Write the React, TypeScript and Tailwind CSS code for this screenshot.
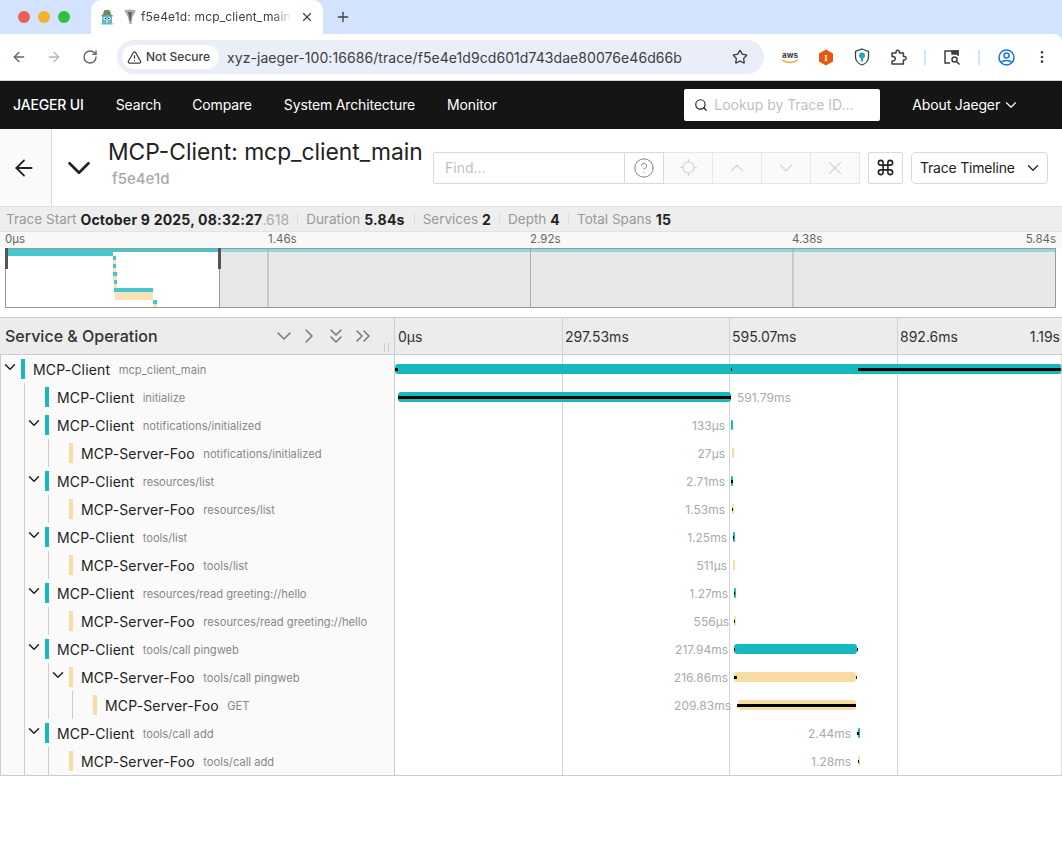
import {
  ArrowLeft,
  ArrowRight,
  ChevronDown,
  ChevronRight,
  ChevronUp,
  ChevronsDown,
  ChevronsRight,
  CircleHelp,
  Command,
  Locate,
  MoreVertical,
  Plus,
  RotateCw,
  Search,
  Star,
  TriangleAlert,
  X,
} from "lucide-react";

type Span = {
  service: string;
  op: string;
  depth: number;
  open?: boolean;
  client: boolean;
  left: number;
  right: number;
  label: string;
  labelEnd?: number;
  labelStart?: number;
  marks?: [number, number][];
};

// x values are page pixels, the timeline starts at 395
const spans: Span[] = [
  { service: "MCP-Client", op: "mcp_client_main", depth: 0, open: true, client: true, left: 395, right: 1062, label: "", marks: [[395, 398], [731, 732], [858, 1062]] },
  { service: "MCP-Client", op: "initialize", depth: 1, client: true, left: 398, right: 731, label: "591.79ms", labelStart: 737, marks: [[398, 731]] },
  { service: "MCP-Client", op: "notifications/initialized", depth: 1, open: true, client: true, left: 731, right: 733, label: "133µs", labelEnd: 725 },
  { service: "MCP-Server-Foo", op: "notifications/initialized", depth: 2, client: false, left: 732, right: 734, label: "27µs", labelEnd: 725 },
  { service: "MCP-Client", op: "resources/list", depth: 1, open: true, client: true, left: 731, right: 733, label: "2.71ms", labelEnd: 725, marks: [[731, 733]] },
  { service: "MCP-Server-Foo", op: "resources/list", depth: 2, client: false, left: 732, right: 734, label: "1.53ms", labelEnd: 725, marks: [[732, 733]] },
  { service: "MCP-Client", op: "tools/list", depth: 1, open: true, client: true, left: 733, right: 735, label: "1.25ms", labelEnd: 727, marks: [[733, 734]] },
  { service: "MCP-Server-Foo", op: "tools/list", depth: 2, client: false, left: 733, right: 735, label: "511µs", labelEnd: 727 },
  { service: "MCP-Client", op: "resources/read greeting://hello", depth: 1, open: true, client: true, left: 734, right: 736, label: "1.27ms", labelEnd: 728, marks: [[734, 735]] },
  { service: "MCP-Server-Foo", op: "resources/read greeting://hello", depth: 2, client: false, left: 734, right: 736, label: "556µs", labelEnd: 729, marks: [[734, 735]] },
  { service: "MCP-Client", op: "tools/call pingweb", depth: 1, open: true, client: true, left: 734, right: 857, label: "217.94ms", labelEnd: 728, marks: [[734, 735], [857, 858]] },
  { service: "MCP-Server-Foo", op: "tools/call pingweb", depth: 2, open: true, client: false, left: 734, right: 856, label: "216.86ms", labelEnd: 728, marks: [[734, 737], [856, 857]] },
  { service: "MCP-Server-Foo", op: "GET", depth: 3, client: false, left: 738, right: 856, label: "209.83ms", labelEnd: 731, marks: [[737, 856]] },
  { service: "MCP-Client", op: "tools/call add", depth: 1, open: true, client: true, left: 858, right: 860, label: "2.44ms", labelEnd: 851, marks: [[857, 859]] },
  { service: "MCP-Server-Foo", op: "tools/call add", depth: 2, client: false, left: 858, right: 860, label: "1.28ms", labelEnd: 851, marks: [[858, 859]] },
];

const TL = 395;

function Gopher() {
  return (
    <svg width="16" height="16" viewBox="0 0 16 16" className="shrink-0">
      <path d="M3 15.500V8a5 5 0 0 1 10 0v7.500z" fill="#5bb8d4" />
      <path d="M1.500 7.500 Q3 6 4 5.500 L5 1.500 Q8 0 11 1.500 L12 5.500 Q13.500 6 14.500 7.500 Q8 5 1.500 7.500z" fill="#6f8a5a" />
      <circle cx="6" cy="9.500" r="1.500" fill="#fff" />
      <circle cx="10" cy="9.500" r="1.500" fill="#fff" />
      <circle cx="6.300" cy="9.500" r=".7" fill="#111" />
      <circle cx="9.700" cy="9.500" r=".7" fill="#111" />
      <rect x="7" y="11.500" width="2" height="2" fill="#f3e3c8" />
      <rect x="1.500" y="14" width="2" height="1.500" fill="#e8c9a0" />
      <rect x="12.500" y="14" width="2" height="1.500" fill="#e8c9a0" />
    </svg>
  );
}

function JaegerFav() {
  return (
    <svg width="14" height="16" viewBox="0 0 14 16" className="shrink-0">
      <path d="M1 1.500 Q7 -0.500 13 1.500 L9.500 8 L8.500 15 L6.500 15 L5 8z" fill="#a9aeb2" />
      <path d="M5 3 L9 3 L7.800 12 L6.800 12z" fill="#5c6368" />
    </svg>
  );
}

function TopChrome() {
  return (
    <div className="h-[81px] bg-[#d3e3fd] flex flex-col">
      <div className="h-[34px] flex items-center">
        <div className="flex items-center gap-[8px] pl-[18px] w-[91px]">
          <span className="w-3 h-3 rounded-full bg-[#ec5f57]" />
          <span className="w-3 h-3 rounded-full bg-[#f4b32e]" />
          <span className="w-3 h-3 rounded-full bg-[#2cc240]" />
        </div>
        <div className="w-[232px] h-[34px] bg-white rounded-t-[10px] flex items-center pl-[8px] self-end">
          <Gopher />
          <span className="ml-[8px] flex">
            <JaegerFav />
          </span>
          <span className="ml-[4px] text-[12px] tracking-[0.15px] text-[#3c4043] whitespace-nowrap [mask-image:linear-gradient(to_right,black_88%,transparent)]">
            f5e4e1d: mcp_client_main
          </span>
          <X className="w-[14px] h-[14px] ml-[9px] shrink-0 text-[#3c4043]" strokeWidth={2} />
        </div>
        <Plus className="w-4 h-4 ml-[12px] text-[#3c4043]" strokeWidth={2} />
      </div>
      <div className="h-[47px] bg-white rounded-tr-[8px] flex items-center border-b border-[#d6d6d6]">
        <div className="flex items-center w-[117px] pl-[11px] gap-[19px]">
          <ArrowLeft className="w-4 h-4 text-[#5f6368]" />
          <ArrowRight className="w-4 h-4 text-[#b4b7ba]" />
          <RotateCw className="w-4 h-4 text-[#5f6368] ml-[1px]" />
        </div>
        <div className="w-[647px] h-[34px] bg-[#e9eef9] rounded-full flex items-center pl-[5px]">
          <div className="w-[97px] h-[24px] bg-white rounded-full flex items-center pl-[5px] gap-[4px]">
            <TriangleAlert className="w-[15px] h-[15px] text-[#3c4043]" />
            <span className="text-[12px] font-medium text-[#3c4043] whitespace-nowrap">Not Secure</span>
          </div>
          <span className="ml-[8px] text-[14px] text-[#3c4043] tracking-[0.07px] whitespace-nowrap">
            xyz-jaeger-100:16686/trace/f5e4e1d9cd601d743dae80076e46d66b
          </span>
          <Star className="w-4 h-4 text-[#3c4043] ml-auto mr-[16px]" />
        </div>
        <div className="relative flex-1 flex items-center">
          {/* extension icons */}
          <div className="ml-[16px] w-[20px] flex flex-col items-center">
            <span className="text-[8px] leading-[8px] font-bold text-[#3c4043]">aws</span>
            <svg width="18" height="5" viewBox="0 0 18 5">
              <path d="M1 1 Q9 6 17 1" stroke="#f59e2c" strokeWidth="1.400" fill="none" />
            </svg>
          </div>
          <div className="ml-[18px] flex">
            <svg width="16" height="17" viewBox="0 0 16 17">
              <path d="M8 0.500 15 4.500V12.500L8 16.500 1 12.500V4.500z" fill="#e8590c" />
              <text x="8" y="12" textAnchor="middle" fontSize="9" fontWeight="700" fill="#fff" fontFamily="Liberation Serif, serif">I</text>
            </svg>
          </div>
          <div className="ml-[20px] flex">
            <svg width="16" height="18" viewBox="0 0 16 18">
              <path d="M8 1 14.500 3.500V9C14.500 13 11 16 8 17 5 16 1.500 13 1.500 9V3.500z" fill="#fff" stroke="#3c4043" strokeWidth="1.300" />
              <circle cx="8" cy="7.500" r="3" fill="#26a6b5" />
              <rect x="7" y="10" width="2" height="3.500" fill="#26a6b5" />
            </svg>
          </div>
          <div className="ml-[20px] flex">
            <svg width="17" height="17" viewBox="0 0 17 17" fill="none" stroke="#3c4043" strokeWidth="1.500">
              <path d="M2 4h4V3a1.700 1.700 0 0 1 3.400 0v1h4v3.500h1a1.700 1.700 0 0 1 0 3.400h-1V15H2v-3h1a2 2 0 0 0 0-4.500H2z" strokeLinejoin="round" />
            </svg>
          </div>
          <span className="ml-[17px] w-[2px] h-[15px] bg-[#d3e3fd]" />
          <div className="ml-[17px] flex">
            <svg width="18" height="17" viewBox="0 0 18 17" fill="none" stroke="#3c4043" strokeWidth="1.500">
              <path d="M7 14H2V2h13v5" />
              <path d="M9 2h6v3H9z" fill="#3c4043" />
              <circle cx="11.500" cy="10.500" r="2.500" />
              <path d="M13.500 12.500 16.500 15.500" />
            </svg>
          </div>
          <span className="ml-[17px] w-[2px] h-[15px] bg-[#d3e3fd]" />
          <div className="ml-[18px] flex">
            <svg width="17" height="17" viewBox="0 0 17 17" fill="none" stroke="#1a73e8" strokeWidth="1.500">
              <circle cx="8.500" cy="8.500" r="7.500" />
              <circle cx="8.500" cy="6.500" r="2.500" />
              <path d="M3.500 13.500C5 10.800 12 10.800 13.500 13.500" />
            </svg>
          </div>
          <MoreVertical className="w-4 h-4 ml-[19px] text-[#3c4043]" />
        </div>
      </div>
    </div>
  );
}

function Nav() {
  return (
    <div className="h-[48px] bg-[#151515] flex items-center text-white text-[14px] tracking-[-0.15px] whitespace-nowrap">
      <span className="ml-[13px] pb-[2px] font-medium">JAEGER UI</span>
      <span className="ml-[32px] pb-[2px]">Search</span>
      <span className="ml-[31px] pb-[2px]">Compare</span>
      <span className="ml-[32px] pb-[2px]">System Architecture</span>
      <span className="ml-[32px] pb-[2px]">Monitor</span>
      <div className="ml-auto w-[196px] h-[32px] bg-white rounded-[2px] flex items-center pl-[10px] gap-[6px] tracking-normal">
        <Search className="w-[14px] h-[14px] text-[#222]" strokeWidth={2} />
        <span className="text-[14px] pb-[2px] tracking-[-0.05px] text-[#bfbfbf]">Lookup by Trace ID...</span>
      </div>
      <span className="ml-[32px] pb-[2px]">About Jaeger</span>
      <ChevronDown className="w-[18px] h-[18px] ml-[2px] mr-[42px]" strokeWidth={1.500} />
    </div>
  );
}

function TraceHeader() {
  return (
    <div className="h-[77px] bg-white flex items-center">
      <div className="w-[52px] h-full bg-[#fafafa] border-r border-[#ddd] flex items-center justify-center pr-[3px]">
        <ArrowLeft className="w-[26px] h-[26px] text-[#222]" strokeWidth={1.700} />
      </div>
      <ChevronDown className="w-[38px] h-[38px] ml-[8px] text-[#222]" strokeWidth={1.700} />
      <div className="ml-[10px] w-[325px] flex flex-col mb-[9px]">
        <span className="text-[22.800px] leading-[32px] text-[#222] whitespace-nowrap">MCP-Client: mcp_client_main</span>
        <span className="ml-[4px] text-[15px] leading-[22px] font-medium text-[#aaa]">f5e4e1d</span>
      </div>
      <div className="h-[32px] flex items-center">
        <div className="w-[192px] h-full border border-[#d9d9d9] rounded-l-[2px] flex items-center pl-[11px] text-[14px] text-[#bfbfbf]">Find...</div>
        <div className="w-[39px] h-full border-y border-r border-[#d9d9d9] flex items-center justify-center">
          <CircleHelp className="w-[22px] h-[22px] text-[#777]" strokeWidth={1} />
        </div>
        <div className="w-[49px] h-full bg-[#fafafa] border-y border-r border-[#e6e6e6] flex items-center justify-center">
          <Locate className="w-[19px] h-[19px] text-[#d5d5d5]" strokeWidth={1.500} />
        </div>
        {[ChevronUp, ChevronDown, X].map((Icon, i) => (
          <div key={i} className="w-[49px] h-full bg-[#fafafa] border-y border-r border-[#e6e6e6] flex items-center justify-center">
            <Icon className="w-[22px] h-[22px] text-[#d5d5d5]" strokeWidth={1.300} />
          </div>
        ))}
      </div>
      <div className="ml-[8px] w-[35px] h-[32px] border border-[#d9d9d9] rounded-[2px] flex items-center justify-center">
        <Command className="w-[19px] h-[19px] text-[#222]" strokeWidth={2} />
      </div>
      <div className="ml-[8px] w-[137px] h-[32px] border border-[#d9d9d9] rounded-[4px] flex items-center pl-[8px] text-[14px] tracking-[-0.2px] text-[#222] whitespace-nowrap">
        Trace Timeline
        <ChevronDown className="w-[18px] h-[18px] ml-[9px]" strokeWidth={1.700} />
      </div>
    </div>
  );
}

function Stat({ name, value, suffix }: { name: string; value: string; suffix?: string }) {
  return (
    <span className="flex items-center whitespace-nowrap">
      <span className="text-[13.500px] text-[#999]">{name}</span>
      <span className="ml-[4px] text-[14px] font-bold tracking-[0.2px] text-[#222]">{value}</span>
      {suffix && <span className="text-[14px] text-[#aaa]">{suffix}</span>}
    </span>
  );
}

function StatsBar() {
  const sep = <span className="mx-[8px] w-px h-[12px] bg-[#ddd]" />;
  return (
    <div className="h-[26px] bg-[#eee] border-y border-[#e4e4e4] flex items-center pl-[6px]">
      <Stat name="Trace Start" value="October 9 2025, 08:32:27" suffix=".618" />
      {sep}
      <Stat name="Duration" value="5.84s" />
      <span className="ml-[1px]" />
      {sep}
      <Stat name="Services" value="2" />
      {sep}
      <Stat name="Depth" value="4" />
      {sep}
      <Stat name="Total Spans" value="15" />
    </div>
  );
}

function Minimap() {
  // rows of the small overview: x, y, w, h, colour
  const teal = "#45c7cd";
  const cream = "#f9e2b5";
  const steps: [number, number, number, number, string][] = [
    [113, 8, 3, 4, teal],
    [113, 12, 3, 4, cream],
    [113, 16, 3, 4, teal],
    [113, 20, 3, 4, cream],
    [113, 24, 4, 4, teal],
    [113, 28, 4, 4, cream],
    [114, 32, 3, 4, teal],
    [114, 36, 3, 4, cream],
    [114, 40, 39, 4, teal],
    [114, 44, 1, 1, cream],
    [115, 44, 38, 8, cream],
    [153, 52, 4, 4, teal],
    [153, 56, 4, 3, cream],
  ];
  return (
    <div className="pr-[6px] pl-[5px] pb-[9px] bg-white">
      <svg width="1051" height="60" viewBox="5 0 1051 60" className="block">
        <rect x="5" y="0" width="1051" height="60" fill="#e8e8e8" />
        <rect x="5" y="0" width="215" height="60" fill="#fff" />
        <rect x="5" y="1" width="1051" height="3" fill="#98d7d9" />
        <rect x="7" y="1" width="212" height="3" fill={teal} />
        <rect x="7" y="1" width="106" height="7" fill={teal} />
        {steps.map(([x, y, w, h, c], i) => (
          <rect key={i} x={x} y={y} width={w} height={h} fill={c} />
        ))}
        {[268, 530.500, 793].map((x) => (
          <rect key={x} x={x - 0.500} y="0" width="1" height="60" fill="#aaa" />
        ))}
        <rect x="5.500" y="0.500" width="1050" height="59" fill="none" stroke="#999" />
        <rect x="5" y="0" width="3" height="21" fill="#555" />
        <rect x="218" y="0" width="3" height="21" fill="#555" />
        <rect x="219" y="21" width="1" height="39" fill="#999" />
      </svg>
    </div>
  );
}

function Ruler() {
  return (
    <div className="h-[16px] bg-[#f8f8f8] pl-[5px] pr-[6px] flex text-[11.500px] leading-[14px] text-[#666]">
      <span className="w-[263px]">0µs</span>
      <span className="w-[262px]">1.46s</span>
      <span className="w-[262px]">2.92s</span>
      <span className="w-[232px]">4.38s</span>
      <span className="ml-auto">5.84s</span>
    </div>
  );
}

function Row({ s }: { s: Span }) {
  const barColor = s.client ? "bg-[#17b8be]" : "bg-[#f8dca1]";
  return (
    <div className="h-[28px] flex">
      <div className="w-[395px] shrink-0 h-full flex items-center bg-[#fafafa] border-l border-[#ccc] border-r border-r-[#ccc]">
        {Array.from({ length: s.depth }).map((_, i) => (
          <span key={i} className="w-[24px] shrink-0 h-full border-r border-[#ccc]" />
        ))}
        <span className="w-[20px] shrink-0 flex justify-center -mt-[4px] -ml-[1px] mr-[1px]">
          {s.open && <ChevronDown className="w-[18px] h-[18px] text-[#222]" strokeWidth={2} />}
        </span>
        <span className={`w-[4px] h-[20px] shrink-0 ${barColor}`} />
        <span className="ml-[8px] text-[14px] tracking-[0.15px] text-[#222] whitespace-nowrap">{s.service}</span>
        <span className="ml-[8.500px] mt-[3px] text-[11.200px] text-[#888] whitespace-nowrap">{s.op}</span>
      </div>
      <div className="relative flex-1 h-full">
        <span
          className={`absolute top-[9px] h-[10px] rounded-[3px] ${barColor}`}
          style={{ left: s.left - TL, width: s.right - s.left }}
        />
        {s.marks?.map(([a, b], i) => (
          <span
            key={i}
            className="absolute top-[13px] h-[3px] bg-black"
            style={{ left: a - TL, width: b - a }}
          />
        ))}
        {s.label && (
          <span
            className="absolute top-[7px] text-[12px] leading-[16px] text-[#aaa] whitespace-nowrap"
            style={
              s.labelStart
                ? { left: s.labelStart - TL }
                : { right: 1062 - (s.labelEnd ?? 0) }
            }
          >
            {s.label}
          </span>
        )}
      </div>
    </div>
  );
}

function TimelineTable() {
  return (
    <div className="relative border-b border-[#ccc]">
      {/* tick lines sit under the bars, which come later in the tree */}
      {[562, 729, 897].map((x) => (
        <span key={x} className="absolute top-0 bottom-0 w-px bg-[#d4d4d4]" style={{ left: x }} />
      ))}
      <div className="h-[38px] bg-[#ececec] border-y border-[#ccc] flex">
        <div className="w-[395px] shrink-0 flex items-center pl-[5px] border-r border-[#ccc] relative">
          <span className="text-[16px] font-medium text-[#333]">Service &amp; Operation</span>
          <div className="ml-auto flex items-center mr-[19px] text-[#777]">
            <ChevronDown className="w-[24px] h-[24px]" strokeWidth={1.500} />
            <ChevronRight className="w-[24px] h-[24px] ml-[1px]" strokeWidth={1.500} />
            <ChevronsDown className="w-[24px] h-[24px] ml-[3px]" strokeWidth={1.500} />
            <ChevronsRight className="w-[24px] h-[24px] ml-[3px]" strokeWidth={1.500} />
          </div>
          <span className="absolute left-[384px] top-[25px] w-[5px] h-[9px] border-x border-[#ccc]" />
        </div>
        <div className="flex-1 flex items-center text-[14px] text-[#333] whitespace-nowrap">
          <span className="w-[170px] pl-[3px]">0µs</span>
          <span className="w-[164px]">297.53ms</span>
          <span className="w-[167px] pl-[3px]">595.07ms</span>
          <span className="pl-[4px]">892.6ms</span>
          <span className="ml-auto mr-[2px]">1.19s</span>
        </div>
      </div>
      {spans.map((s, i) => (
        <Row key={i} s={s} />
      ))}
      <span className="absolute top-[38px] bottom-0 right-0 w-[2px] bg-gradient-to-r from-transparent to-[#ddd]" />
    </div>
  );
}

export default function App() {
  return (
    <div className="w-[1062px] h-[861px] overflow-hidden bg-white font-['Inter',sans-serif]">
      <TopChrome />
      <Nav />
      <TraceHeader />
      <StatsBar />
      <Ruler />
      <Minimap />
      <TimelineTable />
    </div>
  );
}
